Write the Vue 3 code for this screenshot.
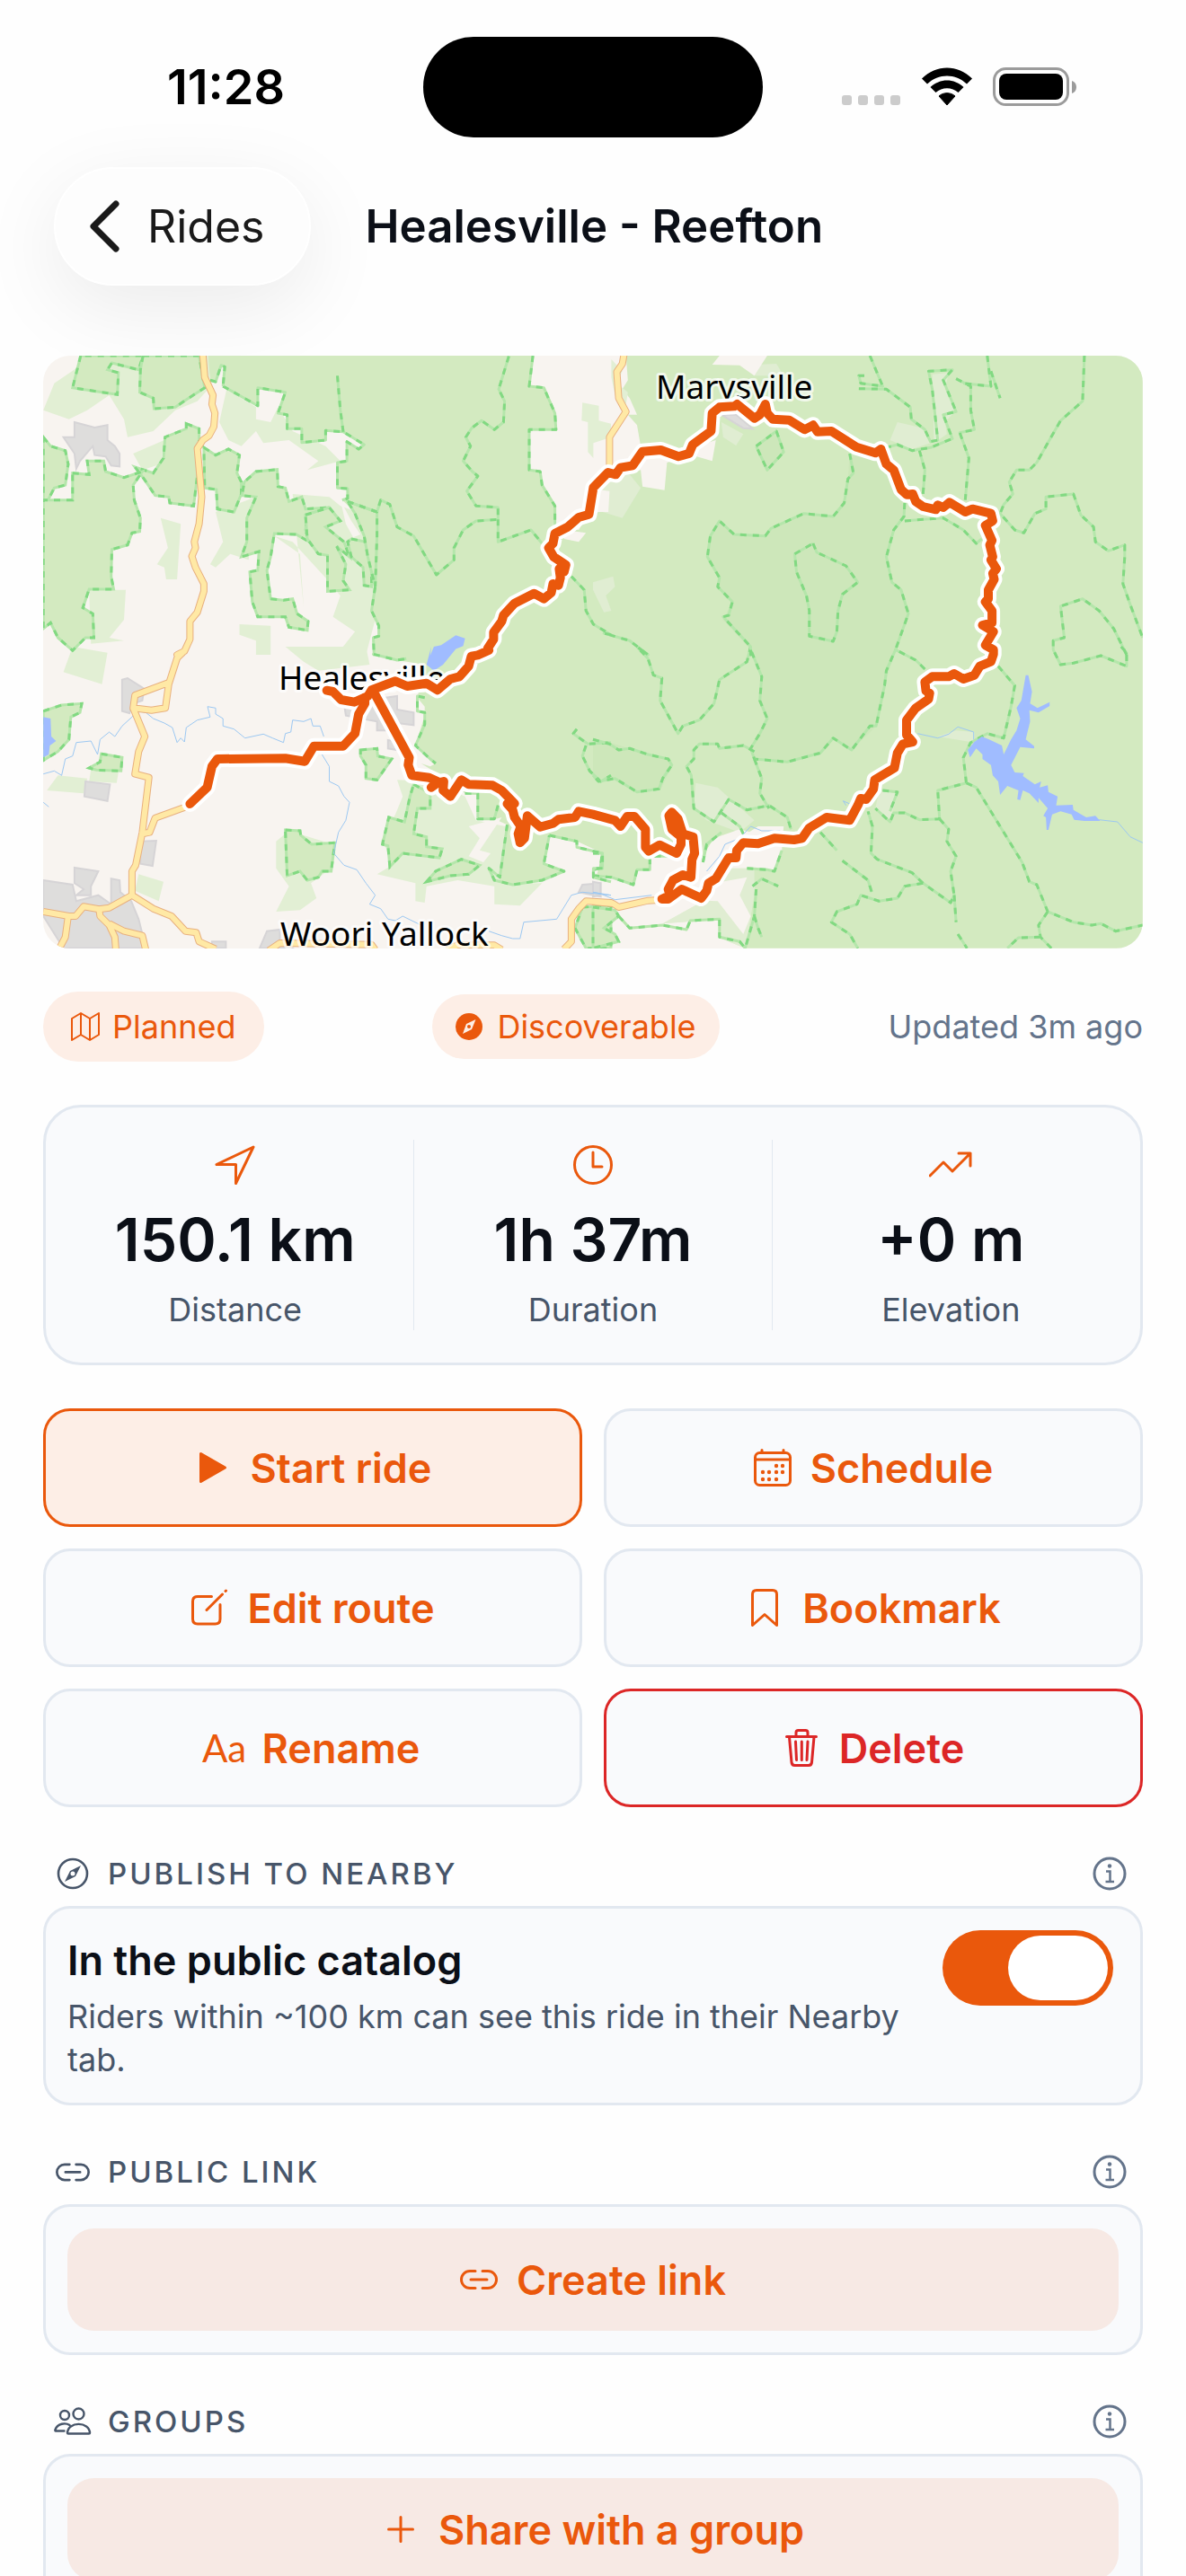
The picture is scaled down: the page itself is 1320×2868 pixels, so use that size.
<script setup>
import { ref } from 'vue'

const published = ref(true)

// Map geometry is stored per tile; each tile has its own origin on the map canvas.
const tiles = { nw: [-8, -6], ne: [612, -6], sw: [-8, 324], se: [612, 324] }

function points(spec) {
  let tile = tiles.nw
  return spec
    .trim()
    .split(/\s+/)
    .map((token) => {
      if (tiles[token]) {
        tile = tiles[token]
        return ''
      }
      const [x, y] = token.split(',').map(Number)
      return `${(x / 2.45 + tile[0]).toFixed(1)},${(y / 3 + tile[1]).toFixed(1)}`
    })
    .filter(Boolean)
    .join(' ')
}

const forest = points(`nw 470,18 475,100 490,105 505,50 515,55 510,120 605,185 605,125 680,140 660,210 685,215 685,262 725,262 725,308 790,300 790,268 838,272 895,315 880,330 848,305 848,370 822,375 822,460 850,462 850,495 835,500 870,540 895,620 905,680 925,790 915,870 935,920 935,955 920,960 922,1017
  sw 920,25 985,45 1060,60 1040,170 1060,200 1060,230 1035,330 1090,390 1075,400 1050,390 1110,435 1170,490 1205,490 1205,575 1250,575 1285,595 1265,780 1300,795 1380,780 1440,750 1385,725 1400,630 1475,650 1545,690 1520,760 1568,790
  se 0,765 50,770 110,795 120,745 155,745 155,700 240,700 300,700 330,640 400,640 450,600 520,600 515,680 495,750 420,740 440,800 430,900 415,1007 1499,1007 ne 1499,18`)

const reserves = [
  'nw 122,18 100,125 222,148 225,75 195,65 207,42 280,65 292,18',
  'nw 292,18 285,65 283,140 320,160 322,195 380,190 410,165 460,125 445,18',
  'nw 410,245 445,262 445,300 440,420 430,520 365,510 362,490 325,485 295,430 270,390 320,410 348,360 352,290 410,262',
  'nw 20,290 40,320 80,335 88,380 80,450 50,460 20,530',
  'nw 100,410 145,415 140,370 185,370 190,405 240,425 290,405 265,450 268,500 285,560 283,605 262,610 250,650 207,665 205,755 212,798 145,798 128,860 155,880 158,960 135,960 100,1003 60,960 40,910 20,930 20,500 100,500',
  'nw 458,325 490,350 525,330 555,350 548,410 560,440 560,480 540,540 495,530 492,465 460,460',
  'nw 600,405 658,398 660,455 680,460 690,505 725,490 735,530 800,525 740,550 735,600 745,640 710,615 650,612 640,690 630,735 640,830 675,835 700,830 712,880 742,905 740,935 690,925 680,890 605,890 590,840 583,740 605,735 608,672 560,690 575,640 575,560 600,490 562,485 568,440',
  'nw 735,550 800,525 830,570 790,590 840,640 855,690 820,655 845,715 838,770 855,800 795,805 795,685 770,680 740,630',
  'nw 860,630 900,640 915,720 915,790 895,785 892,725 860,690 850,640',
  'nw 850,505 930,540 930,620 925,790 905,690 895,620 870,545',
  'sw 20,215 70,195 125,190 120,220 95,235 90,310 60,350 20,380',
  'sw 178,358 235,370 232,415 165,412 145,405 175,385',
  'sw 885,345 930,340 932,365 970,375 950,410 930,445 900,440 900,395 885,365',
  'sw 680,612 720,615 722,630 752,660 815,655 805,750 780,750 770,770 740,780 720,750 685,765',
  'sw 1030,460 1075,490 1075,540 1040,540 1030,625 1065,635 1065,668 1108,675 1100,705 1000,690 965,735 960,665 945,660 962,570 1005,585 1020,500',
  'sw 1065,785 1090,750 1160,710 1210,730 1180,760 1130,765',
  'sw 1490,870 1568,865 1568,1007 1500,1007 1470,940',
  'se 0,870 60,880 70,900 30,940 60,960 70,985 0,1007'
].map(points)

const woods = [
  'nw 20,200 50,110 110,60 220,18 480,18 470,130 440,170 380,200 320,270 250,290 240,230 200,150 140,200 90,230',
  'nw 265,345 350,300 340,380 290,400',
  'nw 520,130 600,190 600,230 640,240 660,190 700,270 790,320 830,370 740,400 770,370 690,300 620,310 600,270 560,320 525,300 500,240',
  'nw 340,560 395,580 385,765 355,765 350,725 330,715 360,660',
  'nw 490,540 600,490 580,700 530,680 490,725 475,715 510,640',
  'nw 700,480 800,490 830,520 920,560 925,900 900,1017 820,1017 870,940 810,890 830,820 790,760 700,640 650,620 720,680 730,860',
  'nw 145,800 245,800 240,900 200,960 240,970 150,980',
  'nw 555,915 640,920 640,1017 600,1017 600,970 555,950',
  'sw 100,0 195,20 180,125 75,85',
  'sw 680,0 900,0 910,60 770,80 730,50',
  'sw 60,430 140,440 130,490 30,480',
  'sw 150,410 225,420 220,455 145,450',
  'sw 280,760 348,785 335,850 270,815',
  'sw 655,650 690,615 810,660 805,740 750,790 765,840 720,880 655,885 690,800 655,740',
  'sw 985,445 1080,450 1170,500 1200,580 1280,600 1270,700 1290,790 1380,790 1320,865 1250,860 1250,800 1150,780 1065,800 1060,855 1035,850 1035,790 930,760 985,720 940,650 980,560 1000,500',
  'ne 0,340 90,400 130,460 80,560 0,530',
  'ne 400,50 500,45 520,85 440,85',
  'ne 350,240 410,280 390,318 355,290',
  'ne 925,80 970,75 960,130 990,200 960,240 965,280 930,310',
  'ne 830,240 900,260 920,310 870,330 810,300',
  'ne 0,775 55,755 60,790 35,820 50,870 30,875 0,800',
  'se 280,455 340,470 440,580 400,620 310,580 275,540',
  'se 780,480 830,490 810,580 770,540',
  'se 990,280 1040,285 1040,320 940,300',
  'se 350,740 440,740 440,830 415,1007 350,975 345,910 190,925 300,850'
].map(points)

const clearings = [
  `nw 1355,18 1345,120 1385,125 1415,210 1418,265 1345,265 1345,400 1375,405 1380,450 1415,520 1410,590 1480,600 1500,560
   ne 15,540 42,540 45,470 10,465 40,420 130,400 135,455 195,467 202,375 270,350 325,370 335,300 260,330 130,320 120,250 95,215 120,215 100,160 80,130 95,100 90,18`,
  'ne 345,18 325,48 400,50 440,85 475,18',
  'nw 605,125 660,140 655,190 625,190 605,160',
  'nw 30,410 60,395 55,440 35,450',
  'nw 830,500 860,570 885,615 865,625 845,580',
  'se 330,640 400,610 520,650 495,710 460,680 380,710 330,790 420,770 400,830 430,900 410,960 340,850 240,845 190,925 145,900 155,850 50,830 55,780 110,795 150,770 190,760 300,780 300,700',
  'sw 1180,600 1270,570 1210,680 1240,690 1220,720 1180,700 1210,640',
  'sw 1400,630 1475,650 1545,690 1530,760 1450,730 1390,680',
  'nw 1440,600 1500,610 1480,640 1440,630'
].map(points)

const meadows = [
  'nw 1490,175 1535,185 1535,235 1568,245 1568,290 1520,310 1520,360 1505,340 1505,240 1488,235',
  'ne 50,30 80,70 65,110 95,140 90,180 60,150 50,90'
].map(points)

const darkWoods = [
  'ne 345,570 385,615 470,620 485,595 575,545 655,555 690,510 700,350 770,345 840,480 850,560 820,600 800,690 815,775 840,800 860,880 825,1000 se 825,10 795,130 772,265 705,345 655,305 620,355 530,385 440,375 430,340 475,240 455,180 460,100 430,10 ne 430,1000 355,900 380,840 340,790 345,760 312,690 315,630',
  'se 0,310 60,325 110,345 200,375 215,400 185,475 115,485 50,440 0,440',
  'ne 445,320 500,270 520,340 475,400'
].map(points)

const towns = [
  'nw 105,240 160,258 195,250 195,300 215,320 228,345 228,388 205,385 190,355 160,350 155,320 120,370 110,395 105,345 75,290 105,290',
  'sw 235,110 250,105 295,140 290,180 265,190 255,222 235,215',
  'sw 135,450 202,460 195,515 132,500',
  'sw 285,650 328,648 318,732 285,725',
  'sw 105,738 170,750 150,800 150,830 110,830 130,810 105,790',
  'sw 20,780 100,795 110,850 170,830 205,860 205,775 228,780 230,820 260,850 280,910 300,1007 75,1007 20,900',
  'sw 840,190 985,165 985,210 1030,220 1030,262 985,255 970,280 930,280 930,250 845,230',
  'sw 960,312 990,318 985,345 960,340',
  'sw 610,1007 630,950 665,945 665,980 700,1007',
  'sw 480,985 518,985 518,1007 480,1007',
  'sw 1490,795 1540,790 1540,835 1480,820',
  'se 0,785 20,790 20,830 0,835',
  'ne 350,215 390,215 435,262 410,260'
].map(points)

const boundaries = [
  'nw 510,120 605,185 605,125 680,140 660,210 685,215 685,262 725,262 725,308 790,300 790,268 838,272 895,315 880,330 848,305 848,370 822,375 822,460 850,462 850,495 835,500',
  'nw 822,85 830,200 838,272',
  'nw 475,100 490,105 505,50 515,55 510,120',
  'nw 850,505 930,540 940,500 965,515 985,590 1030,620 1092,750 1140,700 1140,660 1165,600 1200,570 1260,565 1260,525 1200,520 1175,470 1205,420 1190,405 1165,370 1185,320 1172,290 1188,260 1215,235 1250,265 1275,240 1278,170 1262,130 1290,18',
  'nw 1260,565 1260,640 1350,600 1380,645',
  'nw 1355,18 1345,120 1385,125 1415,210 1418,265 1345,265 1345,400 1375,405 1380,450 1415,520 1415,590',
  'nw 925,790 915,870 935,920 935,955 920,960 922,1017 sw 920,25 985,45 1010,40',
  'sw 1060,170 1040,165 1040,215 1060,220 1060,260 1035,330 1075,375 1090,390',
  'nw 1460,755 1495,800 1500,870 1520,915 1568,950 ne 30,945 100,970 150,1017 se 120,0 150,40 165,95 188,105 183,180 232,290 245,265 290,245 330,190 345,110 420,50 430,0',
  'sw 1475,275 1465,290 1505,325 1568,320', 'sw 1500,330 1490,365 1510,415 1540,450 1568,430',
  'ne 700,345 710,410 695,430 685,510 655,555 575,545 485,595 470,620 385,615 345,570 320,620 312,690 345,760 340,790 380,840 370,885 355,890 430,990 430,1017 se 430,10 460,100 455,180 475,240 455,290 430,340 440,375 530,385 620,355 655,305 705,345 755,265 772,265 795,130 800,80 825,10',
  'ne 600,645 610,675 690,720 722,775 680,815 668,870 665,940 655,972 590,955 590,870 582,820 555,740 550,680 600,645',
  'ne 445,320 500,270 520,340 475,400 445,320',
  'ne 850,510 848,555 820,600 800,690 815,775 840,800 860,880 825,1000 se 825,10 880,45 905,75',
  'ne 850,570 900,565 955,560 1010,600 1045,645 1060,630',
  'ne 755,18 790,120 730,110 725,85 740,85', 'ne 725,128 800,130 865,190 868,230 905,265 920,305 940,300 925,130 915,70 980,65 955,100 990,205 955,215 980,295 920,325 870,335 830,315 800,325',
  'ne 890,335 905,400 900,480', 'ne 990,95 1030,120 1030,200 1040,265 1000,275 1025,360 1015,500',
  'ne 1075,18 1085,120 1010,110', 'ne 1085,70 1110,160',
  'ne 1340,18 1335,170 1275,235 1240,310 1210,375 1190,400 1155,400 1135,440 1145,480 1120,515 1110,545 1150,600 1175,610 1205,545 1235,530 1235,490 1310,480 1330,550 1365,590 1370,640 1405,670 1450,650 1450,690 1445,780 1465,850 1499,960',
  'ne 1455,1017 1420,930 1380,870 1335,830 1275,855 1285,960 1255,970 1255,1000 se 1255,10 1275,60 1310,55 1385,30 1455,65 1455,20 1440,0',
  'se 1105,65 1150,130 1140,200 1120,305 1075,290 1030,320 1010,370 1018,455 940,480 945,575 890,578 850,555 820,555 810,585 770,540',
  'se 790,480 830,485 810,550',
  'se 1018,455 1045,470 1090,560 1130,640 1170,720 1190,785 1210,795 1240,885 1310,920 1360,930 1385,925 1425,950 1499,930',
  'se 1240,885 1215,930 1220,970 1250,1007', 'se 1220,970 1160,972 1130,1007',
  'se 945,575 970,610 965,650 990,700 975,750 985,830 975,855 900,790 870,755 775,710 758,690 762,600 750,550',
  'se 985,830 990,920', 'se 995,960 1020,1007', 'se 900,790 850,800 830,840 780,850 730,830 720,860 665,885 650,920 700,960 722,1007',
  'se 620,620 665,680', 'se 680,715 750,780 760,820',
  'se 0,310 45,325 70,345 100,340 150,360 205,375 215,395 190,440 180,475 120,485 60,440 15,450 0,430',
  'se 440,350 410,330 345,340 340,325 290,325 275,345 275,375 255,400 268,430 275,540 330,585 370,510 420,545 480,530 530,570 540,610',
  'se 440,375 460,440 455,490 480,540', 'se 350,555 400,600 410,625', 'se 300,720 310,660 350,620',
  'se 420,740 475,745 495,750 515,680', 'se 435,800 460,775 505,800', 'se 445,810 440,900 415,1007', 'se 440,900 450,940 460,970',
  'se 0,690 25,690 20,740 0,745', 'se 0,765 50,770 110,795 120,745 155,745 155,700 240,700',
  'se 70,900 100,940 190,930 255,945 265,915 345,910 345,970 400,985 415,1007',
  'sw 1400,630 1475,650 1475,670 1545,690 1545,740 1520,740 1520,770 1568,785',
  'sw 1170,490 1205,490 1205,575 1250,575 1260,530', 'sw 1285,595 1265,770 1235,740 1250,780 1300,795 1380,780 1440,750 1385,725 1400,630'
].map(points)

const roads = [
  'nw 455,10 460,90 483,150 480,180 488,210 485,255 472,285 455,300 440,328 452,490 445,580 432,640 435,660 425,688 435,725 458,780 458,805 440,875 420,905 420,965 405,1005 385,1017 sw 400,20 385,38 362,125 353,205 315,212 265,205 270,162 362,120',
  'sw 265,205 297,300 280,350 270,425 308,437 290,620 272,730 262,750 262,830 200,872 172,877 130,868 108,900 90,900 20,885',
  'sw 290,625 310,620 325,572 420,530',
  'sw 262,830 320,875 370,900 408,950 437,955 445,985 490,1010',
  'sw 172,877 175,900 200,930 215,970 218,1015',
  'sw 200,925 240,950 290,965 300,1015',
  'sw 88,900 80,970 65,1005',
  'sw 635,1015 665,990 915,995 925,1012',
  'sw 1120,1012 1150,997 1250,997 1270,1012',
  'sw 1440,1010 1460,985 1460,910 1480,875 1500,850 1568,855 se 0,852 55,858 70,870 150,848 190,845',
  'ne 85,10 80,45 65,72 70,160 90,205 45,290 45,400'
].map(points)

const rivers = [
  'sw 20,425 50,415 70,430 80,375 100,365 110,320 150,315 168,360 175,310 200,285 215,300 235,265 262,235 275,215 300,220 320,240 350,255 372,270 385,320 395,305 405,318 410,270 440,245 475,235 468,200 490,205 490,225 510,240 510,265 540,275 570,305 620,292 645,305 675,320 680,290 695,285 700,245 730,250 750,240 755,265 775,265 785,300',
  'sw 780,360 800,400 800,450 825,465 840,500 855,520 845,580 825,620 812,690 840,730 875,745 900,790 925,830 910,860 940,875 960,910 980,915 1000,900 1050,930',
  'sw 1235,950 1270,965 1300,975 1320,975 1330,920 1420,910 1460,830 1490,820 1568,830 se 0,820 20,825 60,845 160,830',
  'sw 20,520 35,535', 'se 310,750 345,700 360,660 400,640 430,600 460,615 510,615', 'se 700,525 682,515 690,530',
  'se 885,290 940,305 970,292 995,268 1038,285 1038,310', 'se 1380,578 1430,585 1465,635 1499,655'
].map(points)

const lakes = [
  'nw 1075,1020 1085,990 1105,985 1145,952 1170,962 1165,988 1130,1005 1110,1020 sw 1150,0 1110,60 1085,80 1065,60 1078,0',
  'sw 20,235 40,240 42,300 55,315 38,330 35,360 20,370',
  'se 1180,95 1187,95 1197,150 1192,190 1212,205 1245,185 1245,198 1215,220 1190,212 1192,250 1180,310 1203,332 1203,340 1165,335 1140,395 1150,420 1175,422 1172,432 1205,460 1222,450 1218,470 1240,463 1242,485 1267,500 1263,530 1308,528 1310,545 1345,570 1370,565 1383,582 1340,582 1312,578 1305,560 1275,550 1252,560 1242,612 1237,612 1235,570 1228,565 1240,540 1215,505 1215,522 1190,490 1172,480 1165,512 1157,510 1160,480 1130,465 1110,495 1105,450 1090,430 1085,395 1062,375 1062,360 1045,340 1028,370 1022,345 1040,318 1060,300 1080,310 1115,330 1120,360 1140,310 1155,280 1165,240 1155,205 1168,180'
].map(points)

const tracks = [
  'sw 420,525 467,470 480,400 495,375 680,373 733,383 758,332 838,332 870,290 880,225 897,190 897,170',
  `sw 793,146 810,150 832,177 868,185 905,165 915,145 980,115 1012,132 1065,122 1095,145 1130,108 1155,100 1180,65 1187,32 1205,28 1235,12
   nw 1232,995 1248,965 1248,942 1270,905 1275,885 1305,845 1358,812 1385,830 1405,810 1410,780 1425,785 1430,760 1427,730 1440,740 1445,717 1412,690 1398,660 1410,645 1415,612 1450,590 1480,558 1508,548 1520,458 1560,408
   ne 62,415 75,392 108,385 135,338 185,333 233,355 262,345 272,315 322,270 325,210 345,190 385,187 393,180 440,227 455,215 470,180 475,210 490,230 535,233 577,265 600,250 612,272 650,270 718,323 770,343 785,330 800,380 820,400 840,465 855,482 872,480 880,505 900,522 935,532 940,517 955,525 972,508 1015,540 1035,530 1085,545 1090,570 1070,585 1088,635 1082,650 1090,690 1085,700 1100,730 1090,745 1094,765 1078,800 1078,830 1070,840 1088,870 1088,910 1062,918 1092,940 1070,985 1092,1000
   se 1092,25 1085,50 1055,65 1040,95 1010,108 985,90 970,100 925,100 905,118 908,148 918,155 915,175 880,205 855,245 855,295 872,318 845,325 830,355 822,405 768,445 765,475 745,510 730,507 722,530 700,580 637,570 590,605 570,640 548,645 495,640 450,658 410,655 392,680 390,705 370,705 335,775 315,790 310,815 295,840 242,810 205,843 188,843 210,830
   205,810 218,780 245,762 267,770 270,710 277,690 273,635 245,625 232,575 215,553 207,565 215,610 240,635 240,660 228,690 182,662 152,683 143,670 143,610 113,567 93,567 75,600 60,580 0,560
   sw 1480,550 1470,570 1425,577 1410,590 1375,602 1340,565 1332,640 1320,655 1315,625 1322,600 1305,570 1300,545 1285,525 1305,524 1270,480 1245,463 1180,460 1160,445 1130,500 1110,480 1112,450 1095,455 1078,470 1095,450 1072,437 1025,430 1015,395 1018,370 925,160`
].map(points)

const stats = [
  { icon: 'arrow', value: '150.1 km', label: 'Distance' },
  { icon: 'clock', value: '1h 37m', label: 'Duration' },
  { icon: 'trend', value: '+0 m', label: 'Elevation' }
]

const actions = [
  { icon: 'play', label: 'Start ride', kind: 'primary' },
  { icon: 'calendar', label: 'Schedule' },
  { icon: 'edit', label: 'Edit route' },
  { icon: 'bookmark', label: 'Bookmark' },
  { icon: 'letters', label: 'Rename' },
  { icon: 'trash', label: 'Delete', kind: 'danger' }
]
const calendarDots = [[25, 19], [32, 19], [10, 26], [17, 26], [25, 26], [32, 26], [10, 34], [17, 34], [25, 34]]
</script>

<template>
  <div class="screen">
    <div class="status">
      <div class="clock">11:28</div>
      <div class="island"></div>
      <div class="indicators">
        <svg width="66" height="44" viewBox="0 0 66 44" fill="#cccccc">
          <rect v-for="i in 4" :key="i" :x="(i - 1) * 18" y="31" width="11" height="11" rx="3" />
        </svg>
        <svg width="58" height="44" viewBox="0 0 58 44">
          <path d="M1 12.500C17-3.500 41-3.500 57 12.500L51 18.500C38.500 6.500 19.500 6.500 7 18.500Z" />
          <path d="M10.500 22C21 12 37 12 47.500 22L41.500 28C34.500 21.500 23.500 21.500 16.500 28Z" />
          <path d="M20 32C25 27.500 33 27.500 38 32L29 42Z" stroke="#000" stroke-width="1" stroke-linejoin="round" />
        </svg>
        <svg width="94" height="44" viewBox="0 0 94 44">
          <rect x="1.500" y="1.500" width="82" height="40" rx="13" fill="none" stroke="#9b9b9b" stroke-width="3" />
          <rect x="7" y="7" width="71" height="29" rx="8" />
          <path d="M88 15c3 1 5 3.500 5 7s-2 6-5 7z" fill="#9b9b9b" />
        </svg>
      </div>
    </div>

    <header class="nav">
      <button class="back" type="button">
        <svg width="34" height="58" viewBox="0 0 34 58"><path d="M29 4L4 29L29 54" fill="none" stroke="currentColor" stroke-width="7" stroke-linecap="round" stroke-linejoin="round" /></svg>
        Rides
      </button>
      <h1>Healesville - Reefton</h1>
    </header>

    <main>
      <svg class="map" viewBox="0 0 1224 660" preserveAspectRatio="xMidYMid slice" role="img" aria-label="Route map">
        <rect width="1224" height="660" fill="#f8f4f0" />
        <polygon v-for="(p, i) in woods" :key="'w' + i" :points="p" fill="#e2efd4" />
        <polygon :points="forest" fill="#d3eac0" />
        <polygon v-for="(p, i) in darkWoods" :key="'d' + i" :points="p" fill="#cde7ba" />
        <polygon v-for="(p, i) in woods.slice(15)" :key="'x' + i" :points="p" fill="#e0edd2" />
        <polygon v-for="(p, i) in clearings" :key="'c' + i" :points="p" fill="#f8f4f0" />
        <polygon v-for="(p, i) in meadows" :key="'m' + i" :points="p" fill="#e2efd4" />
        <polygon v-for="(p, i) in towns" :key="'t' + i" :points="p" class="town" />
        <g v-for="(p, i) in reserves" :key="'r' + i">
          <polygon :points="p" fill="#d3eac0" class="edge" />
          <polygon :points="p" class="edge-dash" />
        </g>
        <g v-for="(p, i) in boundaries" :key="'b' + i">
          <polyline :points="p" class="edge" />
          <polyline :points="p" class="edge-dash" />
        </g>
        <polyline v-for="(p, i) in rivers" :key="'v' + i" :points="p" class="river" />
        <polygon v-for="(p, i) in lakes" :key="'l' + i" :points="p" fill="#a0bcff" />
        <polyline v-for="(p, i) in roads" :key="'rc' + i" :points="p" class="road-case" />
        <polyline v-for="(p, i) in roads" :key="'rf' + i" :points="p" class="road" />
        <g class="places">
          <text x="682" y="48">Marysville</text>
          <text x="262" y="372">Healesville</text>
          <text x="264" y="657">Woori Yallock</text>
        </g>
        <polyline v-for="(p, i) in tracks" :key="'tc' + i" :points="p" class="track-case" />
        <polyline v-for="(p, i) in tracks" :key="'tf' + i" :points="p" class="track" />
      </svg>

      <div class="meta">
        <span class="chip chip-tall">
          <svg width="32" height="32" viewBox="0 0 32 32" fill="none" stroke="currentColor" stroke-width="2" stroke-linejoin="round"><path d="M1 7L11 1L21 7L31 1V25L21 31L11 25L1 31ZM11 1V25M21 7V31" /></svg>
          Planned
        </span>
        <span class="chip">
          <svg width="30" height="30" viewBox="0 0 30 30"><circle cx="15" cy="15" r="15" fill="currentColor" /><path d="M22.500 7L18 18L8 23L12 12Z" fill="#fdeee6" /><circle cx="15" cy="15" r="2" fill="currentColor" /></svg>
          Discoverable
        </span>
        <span class="updated">Updated 3m ago</span>
      </div>

      <section class="stats">
        <div v-for="s in stats" :key="s.label" class="stat">
          <svg class="stat-icon" viewBox="0 0 48 56" fill="none" stroke="currentColor" stroke-width="3" stroke-linejoin="round" stroke-linecap="round">
            <path v-if="s.icon === 'arrow'" d="M44 8L3 27.500H24.500V48.500Z" />
            <template v-else-if="s.icon === 'clock'">
              <circle cx="24" cy="28" r="20.500" /><path d="M24 14V30H34" />
            </template>
            <path v-else d="M1 40L16 25L26 35L46 15M33 15H46V29" />
          </svg>
          <strong>{{ s.value }}</strong>
          <span>{{ s.label }}</span>
        </div>
      </section>

      <section class="actions">
        <button v-for="a in actions" :key="a.label" type="button" class="action" :class="a.kind">
          <span v-if="a.icon === 'letters'" class="icon letters" aria-hidden="true">Aa</span>
          <svg v-else class="icon" viewBox="0 0 42 42" fill="none" stroke="currentColor" stroke-width="3" stroke-linecap="round" stroke-linejoin="round">
            <path v-if="a.icon === 'play'" d="M7.500 5.500V36.500L34.500 21Z" fill="currentColor" />
            <template v-else-if="a.icon === 'calendar'">
              <rect x="1.500" y="4.500" width="39" height="36" rx="5" />
              <path d="M2 12H40M9 4V1.500M33 4V1.500" />
              <circle v-for="d in calendarDots" :key="d.join()" :cx="d[0]" :cy="d[1]" r="2.200" fill="currentColor" stroke="none" />
            </template>
            <template v-else-if="a.icon === 'edit'">
              <path d="M23.500 8.500H8Q2.500 8.500 2.500 14V33.500Q2.500 39 8 39H27.500Q33 39 33 33.500V17.500" />
              <path d="M18 23.500L35.500 6M39 2.500L39.500 2" />
            </template>
            <path v-else-if="a.icon === 'bookmark'" d="M7.500 40.500V6Q7.500 1.500 12 1.500H30Q34.500 1.500 34.500 6V40.500L21 28.500Z" />
            <path v-else d="M4.500 8.500H37.500M15 8V4Q15 1.500 17.500 1.500H25.500Q28 1.500 28 4V8M7.500 9L10 37Q10.300 40.500 13.500 40.500H29Q32.200 40.500 32.500 37L35 9M14.500 14L15.500 34.500M21.300 14V34.500M28 14L27 34.500" />
          </svg>
          {{ a.label }}
        </button>
      </section>

      <section>
        <div class="section-head">
          <svg width="38" height="38" viewBox="0 0 38 38"><circle cx="19" cy="19" r="16" fill="none" stroke="currentColor" stroke-width="2.600" /><path fill-rule="evenodd" fill="currentColor" d="M28 10L22 22L10 28L16 16ZM19 16.500a2.500 2.500 0 100 5a2.500 2.500 0 000-5z" /></svg>
          <h2>PUBLISH TO NEARBY</h2>
          <button class="info" type="button" aria-label="About publishing to nearby">
            <svg width="38" height="38" viewBox="0 0 38 38" fill="none" stroke="currentColor" stroke-width="3"><circle cx="19" cy="19" r="17" /><path d="M15 16.500H19.500V27.500M14.500 28H24" stroke-width="2.500" /><circle cx="19" cy="10.500" r="2.200" fill="currentColor" stroke="none" /></svg>
          </button>
        </div>
        <div class="card catalog">
          <div class="catalog-text">
            <label for="catalog">In the public catalog</label>
            <p>Riders within ~100 km can see this ride in their Nearby tab.</p>
          </div>
          <input id="catalog" v-model="published" class="switch" type="checkbox" role="switch" />
        </div>
      </section>

      <section>
        <div class="section-head">
          <svg width="38" height="38" viewBox="0 0 42 42" fill="none" stroke="currentColor" stroke-width="3" stroke-linecap="round"><path d="M17 12H11a9 9 0 000 19h6M25 12h6a9 9 0 010 19h-6M12 21.500H30" /></svg>
          <h2>PUBLIC LINK</h2>
          <button class="info" type="button" aria-label="About public links">
            <svg width="38" height="38" viewBox="0 0 38 38" fill="none" stroke="currentColor" stroke-width="3"><circle cx="19" cy="19" r="17" /><path d="M15 16.500H19.500V27.500M14.500 28H24" stroke-width="2.500" /><circle cx="19" cy="10.500" r="2.200" fill="currentColor" stroke="none" /></svg>
          </button>
        </div>
        <div class="card">
          <button class="soft" type="button">
            <svg class="icon" viewBox="0 0 42 42" fill="none" stroke="currentColor" stroke-width="3" stroke-linecap="round"><path d="M17 11.500H11a9 9 0 000 19h6M25 11.500h6a9 9 0 010 19h-6M12 21H30" /></svg>
            Create link
          </button>
        </div>
      </section>

      <section>
        <div class="section-head">
          <svg class="people" width="38" height="38" viewBox="0 0 38 38" fill="none" stroke="currentColor" stroke-width="2.400" stroke-linecap="round" stroke-linejoin="round"><circle cx="25.500" cy="10.500" r="6" /><circle cx="10" cy="12" r="5" /><path d="M13 32C13 18.500 38 18.500 38 32Q38 32.500 37 32.500H14Q13 32.500 13 32ZM9.500 29.500H0Q-1 29.500-.500 28C2 21 11 20 15.500 23" /></svg>
          <h2>GROUPS</h2>
          <button class="info" type="button" aria-label="About groups">
            <svg width="38" height="38" viewBox="0 0 38 38" fill="none" stroke="currentColor" stroke-width="3"><circle cx="19" cy="19" r="17" /><path d="M15 16.500H19.500V27.500M14.500 28H24" stroke-width="2.500" /><circle cx="19" cy="10.500" r="2.200" fill="currentColor" stroke="none" /></svg>
          </button>
        </div>
        <div class="card">
          <button class="soft" type="button">
            <svg class="icon" viewBox="0 0 42 42" fill="none" stroke="currentColor" stroke-width="3" stroke-linecap="round"><path d="M21 7.500V34.500M7.500 21H34.500" /></svg>
            Share with a group
          </button>
        </div>
      </section>
    </main>
  </div>
</template>

<style>
body {
  background: #fefefe;
}
</style>

<style scoped>
.screen {
  height: 100vh;
  overflow-x: hidden;
  overflow-y: auto;
  scrollbar-width: none;
  background: #fefefe;
  color: #0b0f17;
  font-family: Inter, "Liberation Sans", sans-serif;
}
.screen * {
  box-sizing: border-box;
}
svg {
  display: block;
  flex: none;
}
button {
  font-family: inherit;
  margin: 0;
  padding: 0;
  border: 0;
  cursor: pointer;
}
h1,
h2,
p {
  margin: 0;
}

.status {
  display: grid;
  grid-template-columns: 1fr 378px 1fr;
  align-items: center;
  padding-top: 41px;
}
.clock {
  padding-left: 32px;
  text-align: center;
  font-size: 54px;
  line-height: 66px;
  font-weight: 600;
  color: #000;
}
.island {
  height: 112px;
  border-radius: 56px;
  background: #000;
}
.indicators {
  display: flex;
  justify-content: center;
  gap: 22px;
  padding-right: 34px;
}

.nav {
  display: flex;
  align-items: center;
  gap: 60px;
  margin-top: 33px;
  padding: 0 60px;
}
.back {
  display: flex;
  align-items: center;
  gap: 30px;
  height: 132px;
  padding: 0 50px 0 38px;
  border: 2px solid #ffffff;
  border-radius: 66px;
  background: #fdfdfd;
  box-shadow: 0 24px 90px rgba(0, 0, 0, 0.08);
  color: #1a1a1a;
  font-size: 50px;
}
h1 {
  font-size: 51px;
  line-height: 66px;
  font-weight: 600;
}

main {
  padding: 78px 48px 48px;
}
.map {
  width: 100%;
  height: auto;
  aspect-ratio: 1224 / 660;
  border-radius: 30px;
}
.map polyline {
  fill: none;
  stroke-linejoin: round;
}
.town {
  fill: #dedddc;
  stroke: #d6d4d6;
  stroke-width: 2;
}
.edge {
  stroke: #b5e6ab;
  stroke-width: 3;
}
.edge-dash {
  fill: none;
  stroke: #82d982;
  stroke-width: 3;
  stroke-dasharray: 7 7;
}
.river {
  stroke: #9cc8f2;
  stroke-width: 1;
}
.map .road-case {
  stroke: #e8b07f;
  stroke-width: 8;
}
.map .road {
  stroke: #ffe9a5;
  stroke-width: 6;
}
.places {
  font-family: "Noto Sans", sans-serif;
  font-size: 37px;
  fill: #000;
  stroke: #ffffff;
  stroke-opacity: 0.7;
  stroke-width: 6px;
  stroke-linejoin: round;
  paint-order: stroke;
}
.map .track-case,
.map .track {
  stroke: #ffffff;
  stroke-width: 18;
  stroke-linecap: round;
}
.map .track {
  stroke: #ea580c;
  stroke-width: 10;
}

.meta {
  display: flex;
  align-items: center;
  justify-content: space-between;
  margin-top: 48px;
  font-size: 36px;
  line-height: 44px;
}
.chip {
  display: flex;
  align-items: center;
  gap: 16px;
  padding: 14px 26px;
  border-radius: 39px;
  background: #fdeee6;
  color: #ea580c;
}
.chip-tall {
  gap: 14px;
  padding: 17px 31px;
}
.updated {
  color: #64748b;
}

.stats {
  display: flex;
  margin-top: 48px;
  padding: 36px 12px;
  border: 3px solid #e2e8f0;
  border-radius: 42px;
  background: #f9fafc;
}
.stat {
  flex: 1;
  display: flex;
  flex-direction: column;
  align-items: center;
  gap: 15px;
}
.stat + .stat {
  border-left: 1px solid #e2e8f0;
}
.stat-icon {
  width: 48px;
  height: 56px;
  color: #ea580c;
}
.stat strong {
  font-size: 66px;
  line-height: 80px;
  font-weight: 600;
}
.stat span {
  font-size: 36px;
  line-height: 46px;
  color: #475569;
}

.actions {
  display: grid;
  grid-template-columns: 1fr 1fr;
  gap: 24px;
  margin-top: 48px;
}
.action,
.soft {
  display: flex;
  align-items: center;
  justify-content: center;
  gap: 21px;
  border-radius: 30px;
  color: #ea580c;
  font-size: 45px;
  font-weight: 600;
}
.action {
  height: 132px;
  border: 3px solid #e2e8f0;
  background: #f9fafc;
}
.primary {
  border-color: #ea580c;
  background: #fdeee6;
}
.danger {
  border-color: #dc2626;
  color: #dc2626;
}
.icon {
  width: 42px;
  height: 42px;
}
.letters {
  display: flex;
  align-items: center;
  justify-content: center;
  font-family: Lato, sans-serif;
  font-size: 42px;
  font-weight: 400;
}

.section-head {
  display: flex;
  align-items: center;
  gap: 20px;
  height: 72px;
  margin-top: 38px;
  padding: 0 18px 0 14px;
  color: #475569;
}
h2 {
  flex: 1;
  font-size: 33px;
  font-weight: 500;
  letter-spacing: 3px;
}
.people {
  overflow: visible;
}
.info {
  background: none;
  color: #64748b;
}
.card {
  padding: 24px;
  border: 3px solid #e2e8f0;
  border-radius: 30px;
  background: #f9fafc;
}
.catalog {
  display: flex;
  align-items: flex-start;
  gap: 24px;
}
.catalog-text {
  flex: 1;
}
.catalog-text label {
  display: block;
  font-size: 45px;
  line-height: 68px;
  font-weight: 600;
}
.catalog-text p {
  margin-top: 4px;
  font-size: 36px;
  line-height: 48px;
  color: #475569;
}
.switch {
  appearance: none;
  display: flex;
  flex: none;
  width: 190px;
  height: 84px;
  margin: 0 6px 0 0;
  padding: 6px;
  border-radius: 42px;
  background: #cbd5e1;
  cursor: pointer;
}
.switch::before {
  content: "";
  width: 111px;
  border-radius: 36px;
  background: #ffffff;
}
.switch:checked {
  justify-content: flex-end;
  background: #ea580c;
}
.soft {
  width: 100%;
  height: 114px;
  background: #f7e9e4;
}
</style>
